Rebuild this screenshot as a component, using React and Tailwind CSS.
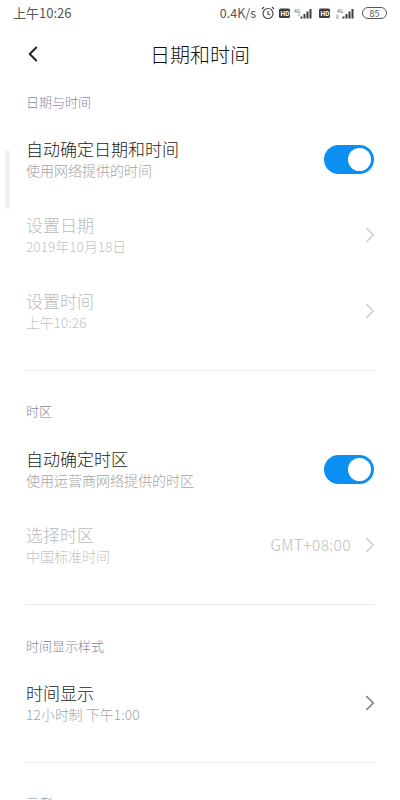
import { ChevronRight, ChevronLeft } from "lucide-react";

const FONT = { fontFamily: '"Noto Sans CJK SC", "Roboto", sans-serif' };

function Hd() {
  return (
    <svg width="11" height="13" viewBox="0 0 11 13" className="block">
      <rect x="0" y="1.5" width="11" height="9.5" rx="1.5" fill="#3d3d3d" />
      <text x="1.6" y="8.8" fontSize="6.5" fontWeight="700" fill="#fff" fontFamily="Roboto, sans-serif">HD</text>
    </svg>
  );
}

function Bars({ second }) {
  return (
    <svg width="20" height="13" viewBox="0 0 20 13" className="block">
      <text x={second ? 1 : 0} y="5.5" fontSize="5" fill="#666" fontFamily="Roboto, sans-serif">4G</text>
      {second ? (
        <text x="0" y="11.5" fontSize="5" fill="#666" fontFamily="Roboto, sans-serif">ll</text>
      ) : (
        <circle cx="5" cy="8" r="0.7" fill="#666" />
      )}
      <rect x="6.5" y="9.5" width="2" height="2" fill="#3d3d3d" />
      <rect x="9.5" y="7" width="2" height="4.5" fill="#3d3d3d" />
      <rect x="12.5" y="4.5" width="2" height="7" fill="#3d3d3d" />
      <rect x="15.5" y="2" width="2" height="9.5" fill="#3d3d3d" />
    </svg>
  );
}

function Toggle() {
  return (
    <div className="w-[50px] h-[29px] rounded-full bg-[#0c8ff2] flex items-center justify-end pr-[3px]">
      <div className="w-[23px] h-[23px] rounded-full bg-white" />
    </div>
  );
}

function Row({ title, sub, subClass = "text-[14px]", right, disabled, toggle, className }) {
  return (
    <div className={`flex items-center justify-between px-[26px] ${className}`}>
      <div>
        <div className={`text-[17px] leading-[22px] font-light ${disabled ? "text-[#bcbcbc]" : "text-[#1c1c1c]"}`}>{title}</div>
        <div className={`leading-[20px] font-light ${subClass} ${disabled ? "text-[#c4c4c4]" : "text-[#a3a3a3]"}`}>{sub}</div>
      </div>
      {toggle ? (
        <Toggle />
      ) : (
        <div className="flex items-center">
          {right && <span className="text-[15.5px] tracking-[0.4px] font-light text-[#bdbdbd] mr-[6px]">{right}</span>}
          <ChevronRight size={26} strokeWidth={1.5} className={`-mr-[9px] ${disabled ? "text-[#cfcfcf]" : "text-[#7d7d7d]"}`} />
        </div>
      )}
    </div>
  );
}

function Label({ children, className }) {
  return <div className={`px-[26px] text-[13px] leading-[18px] font-light text-[#8187a5] ${className}`}>{children}</div>;
}

function Divider({ className }) {
  return <div className={`mx-[26px] h-px bg-[#ececec] ${className}`} />;
}

export default function App() {
  return (
    <div style={FONT} className="relative w-[400px] h-[800px] overflow-hidden bg-white">
      <div className="absolute left-[5px] top-[150px] w-[5px] h-[59px] rounded-full bg-[#f1f1f1]" />

      <div className="h-[26px] pl-[13px] pr-[13px] flex items-center justify-between text-[#555]">
        <span className="text-[13px]">上午10:26</span>
        <div className="flex items-center">
          <span className="text-[12.5px] mr-[5px]">0.4K/s</span>
          <svg width="14" height="14" viewBox="0 0 14 14" fill="none" stroke="#444" strokeWidth="1.1" className="mr-[4px]">
            <circle cx="7" cy="7.5" r="5" />
            <path d="M7 5v3l2 1M1 3l2-2M13 3l-2-2" />
          </svg>
          <Hd />
          <div className="ml-[4px] mr-[5px]"><Bars /></div>
          <Hd />
          <div className="ml-[6px] mr-[6px]"><Bars second /></div>
          <div className="w-[25px] h-[12px] rounded-full border border-[#555] flex items-center justify-center text-[9px] leading-none">85</div>
        </div>
      </div>

      <div className="relative h-[58px] flex items-center justify-center">
        <ChevronLeft size={26} strokeWidth={1.8} className="absolute left-[20px] top-[15px] text-[#222]" />
        <span className="text-[20px] font-light text-[#111]">日期和时间</span>
      </div>

      <Label className="mt-[9px]">日期与时间</Label>
      <Row className="mt-[27px]" title="自动确定日期和时间" sub="使用网络提供的时间" toggle />
      <Row className="mt-[34px]" title="设置日期" sub="2019年10月18日" subClass="text-[13.75px]" disabled />
      <Row className="mt-[34px]" title="设置时间" sub="上午10:26" subClass="text-[13.75px]" disabled />
      <Divider className="mt-[38px]" />

      <Label className="mt-[31px]">时区</Label>
      <Row className="mt-[28px]" title="自动确定时区" sub="使用运营商网络提供的时区" toggle />
      <Row className="mt-[34px]" title="选择时区" sub="中国标准时间" right="GMT+08:00" disabled />
      <Divider className="mt-[38px]" />

      <Label className="mt-[32px]">时间显示样式</Label>
      <Row className="mt-[27px]" title="时间显示" sub="12小时制 下午1:00" subClass="text-[13.75px] tracking-[0.15px]" />
      <Divider className="mt-[38px]" />

      <Label className="mt-[31px]">示例</Label>
    </div>
  );
}
